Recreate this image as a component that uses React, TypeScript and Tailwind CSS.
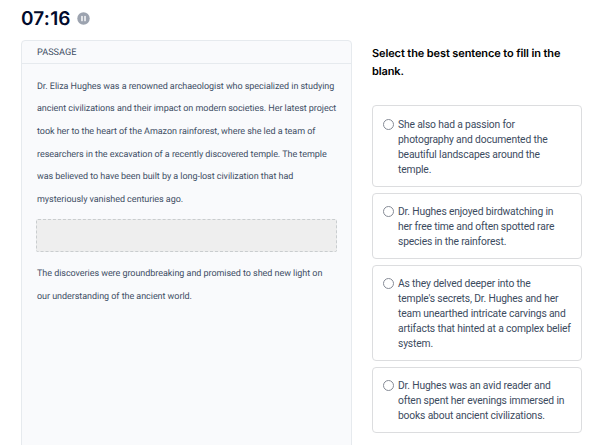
import { useState } from "react";

const passage = `Dr. Eliza Hughes was a renowned archaeologist who specialized in studying
ancient civilizations and their impact on modern societies. Her latest project
took her to the heart of the Amazon rainforest, where she led a team of
researchers in the excavation of a recently discovered temple. The temple
was believed to have been built by a long-lost civilization that had
mysteriously vanished centuries ago.`;

const passageEnd = `The discoveries were groundbreaking and promised to shed new light on
our understanding of the ancient world.`;

const options = [
  `She also had a passion for
photography and documented the
beautiful landscapes around the
temple.`,
  `Dr. Hughes enjoyed birdwatching in
her free time and often spotted rare
species in the rainforest.`,
  `As they delved deeper into the
temple's secrets, Dr. Hughes and her
team unearthed intricate carvings and
artifacts that hinted at a complex belief
system.`,
  `Dr. Hughes was an avid reader and
often spent her evenings immersed in
books about ancient civilizations.`,
];

export default function App() {
  const [selected, setSelected] = useState<number | null>(null);
  const [paused, setPaused] = useState(false);

  return (
    <div className="h-[445px] w-[600px] overflow-hidden bg-white pl-[21px] font-['Inter',sans-serif] [text-rendering:geometricPrecision]">
      {/* Timer */}
      <div className="flex h-[40px] items-center gap-[6px] pb-[3px]">
        <span className="w-[50px] text-[19px] font-semibold leading-none tracking-[0.2px] text-[#020b2d]">
          07:16
        </span>
        <button
          onClick={() => setPaused(!paused)}
          aria-label={paused ? "Resume" : "Pause"}
          className="flex"
        >
          <svg className="h-[13px] w-[13px]" viewBox="0 0 24 24">
            <circle cx="12" cy="12" r="11.5" fill="#9ca3af" />
            <path d="M9.2 8v8M14.8 8v8" stroke="#fff" strokeWidth="2.6" strokeLinecap="round" />
          </svg>
        </button>
      </div>

      <div className="flex items-start gap-5">
        {/* Passage */}
        <div className="h-[420px] w-[331px] shrink-0 rounded-[4px] border border-[#e6eaee] bg-[#f9fafc] font-['Roboto',sans-serif] text-[#3f4f65]">
          <div className="flex h-[23px] items-center border-b border-[#e6eaee] pl-[15px] pt-px text-[9.2px]">
            PASSAGE
          </div>
          <div className="whitespace-pre px-[15px] pt-[11.5px] text-[9px] leading-[22.7px] tracking-[-0.05px]">
            <p>{passage}</p>
            <div className="mb-[11px] mt-[7.3px] -ml-px h-[33px] w-[301px] rounded-[2px] border border-dashed border-[#c9cdcf] bg-[#eeeeee]" />
            <p>{passageEnd}</p>
          </div>
        </div>

        {/* Question */}
        <div className="w-[210px] shrink-0 pt-[5px]">
          <h2 className="mb-[25.2px] text-[11px] font-semibold leading-[17.6px] tracking-[-0.11px] text-black">
            Select the best sentence to fill in the blank.
          </h2>
          <div className="flex flex-col gap-[5.6px]">
            {options.map((option, i) => (
              <button
                key={i}
                onClick={() => setSelected(i)}
                className="flex items-start gap-[4.5px] rounded-[4px] border border-[#dcdddf] pb-[9.2px] pl-[9.5px] pt-[10.2px] text-left"
              >
                <span
                  className={`mt-[2px] h-[11px] w-[11px] shrink-0 rounded-full border ${
                    selected === i ? "border-[3px] border-blue-600" : "border-[#868b96]"
                  }`}
                />
                <span className="whitespace-pre font-['Roboto',sans-serif] text-[10.3px] leading-[15.04px] tracking-[-0.16px] text-[#3c4b60]">
                  {option}
                </span>
              </button>
            ))}
          </div>
        </div>
      </div>
    </div>
  );
}
